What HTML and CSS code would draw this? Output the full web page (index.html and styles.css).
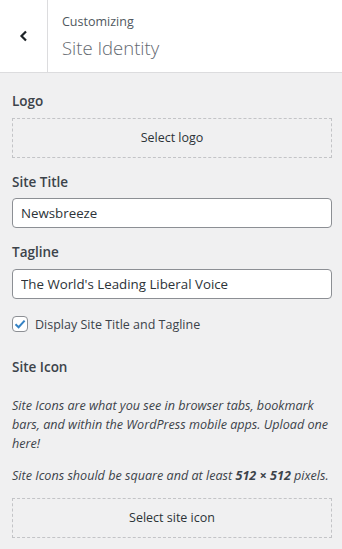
FILE: index.html
```html
<!DOCTYPE html>
<html lang="en">
<head>
  <meta charset="UTF-8">
  <title>Site Identity</title>
  <link rel="stylesheet" href="styles.css">
</head>
<body>
  <div class="panel">
    <header class="panel-header">
      <button class="back" aria-label="Back">
        <svg width="20" height="20" viewBox="0 0 20 20"><path d="M12 5.5 L7.5 10 L12 14.5" fill="none" stroke="#1d2327" stroke-width="2.2"/></svg>
      </button>
      <div class="title">
        <span class="action">Customizing</span>
        <h2>Site Identity</h2>
      </div>
    </header>

    <div class="controls">
      <div class="control">
        <span class="label">Logo</span>
        <button class="upload">Select logo</button>
      </div>

      <div class="control">
        <label class="label" for="blogname">Site Title</label>
        <input type="text" id="blogname" value="Newsbreeze">
      </div>

      <div class="control">
        <label class="label" for="tagline">Tagline</label>
        <input type="text" id="tagline" value="The World's Leading Liberal Voice">
      </div>

      <div class="control">
        <label class="check">
          <span class="box">
            <svg width="16" height="16" viewBox="0 0 16 16"><path d="M3.5 8.2 L6.6 11.2 L12.6 4.6" fill="none" stroke="#3582c4" stroke-width="2"/></svg>
          </span>
          Display Site Title and Tagline
        </label>
      </div>

      <div class="control icon-control">
        <span class="label">Site Icon</span>
        <p class="desc first">Site Icons are what you see in browser tabs, bookmark bars, and within the WordPress mobile apps. Upload one here!</p>
        <p class="desc">Site Icons should be square and at least <strong>512 × 512</strong> pixels.</p>
        <button class="upload">Select site icon</button>
      </div>
    </div>
  </div>
</body>
</html>
```

FILE: styles.css
```css
body {
  margin: 0;
  font-family: "Open Sans", "Noto Sans", sans-serif;
  font-size: 12.5px;
  color: #3c434a;
  background-color: #f0f0f1;
}
.panel-header {
  display: flex;
  height: 72px;
  background-color: #fff;
  border-bottom: 1px solid #dcdcde;
}
.back {
  width: 48px;
  border: none;
  border-right: 1px solid #dcdcde;
  background: #fff;
  padding: 0;
  display: flex;
  align-items: center;
  justify-content: center;
}
.title {
  padding: 13px 14px 12px;
}
.action {
  display: block;
  font-size: 12.5px;
  color: #50575e;
  line-height: 1.5;
}
.title h2 {
  margin: 4px 0 0;
  font-size: 18.5px;
  font-weight: 300;
  color: #646970;
  line-height: 1.3;
}
.controls {
  padding: 17px 10px 0 12px;
}
.control {
  margin-bottom: 13px;
}
.label {
  display: block;
  font-size: 13.5px;
  font-weight: 600;
  line-height: 1.75;
  margin-bottom: 4px;
}
.upload {
  display: block;
  width: 100%;
  height: 40px;
  background: transparent;
  border: 1px dashed #c3c4c7;
  font-family: inherit;
  font-size: 12.5px;
  color: #2c3338;
}
input[type="text"] {
  display: block;
  box-sizing: border-box;
  width: 100%;
  height: 30px;
  padding: 0 8px;
  border: 1px solid #8c8f94;
  border-radius: 4px;
  font-family: inherit;
  font-size: 13.3px;
  color: #2c3338;
  background: #fff;
}
.check {
  display: flex;
  align-items: center;
  gap: 7px;
  margin: 17px 0 23px;
}
.box {
  width: 16px;
  height: 16px;
  box-sizing: border-box;
  border: 1px solid #8c8f94;
  border-radius: 4px;
  background: #fff;
  display: flex;
}
.box svg {
  margin: -1px;
}
.desc {
  font-style: italic;
  font-size: 12.6px;
  margin: 13px 0;
  line-height: 19px;
}
.desc.first {
  margin-top: 16px;
}
```
